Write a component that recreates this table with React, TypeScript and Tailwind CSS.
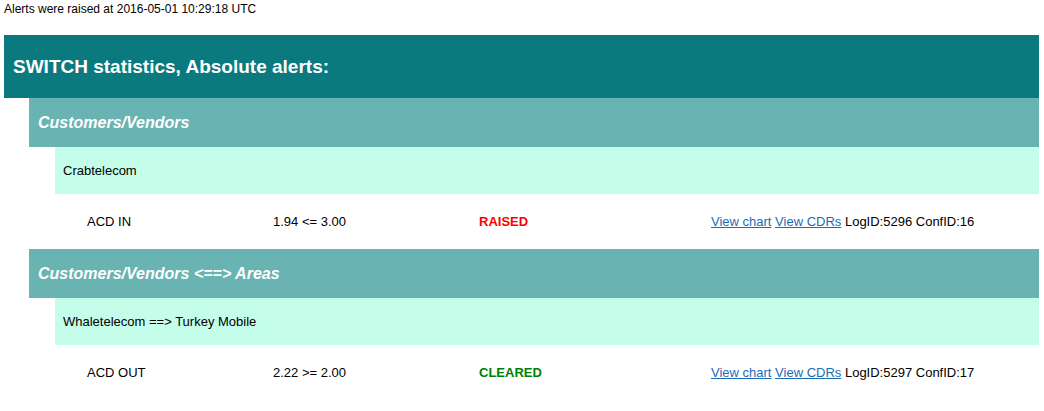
const alerts = [
  {
    group: "Customers/Vendors",
    entity: "Crabtelecom",
    metric: "ACD IN",
    value: "1.94 <= 3.00",
    status: "RAISED",
    logId: 5296,
    confId: 16,
  },
  {
    group: "Customers/Vendors <==> Areas",
    entity: "Whaletelecom ==> Turkey Mobile",
    metric: "ACD OUT",
    value: "2.22 >= 2.00",
    status: "CLEARED",
    logId: 5297,
    confId: 17,
  },
];

export default function App() {
  return (
    <div className="min-h-[411px] bg-white pl-[4px] pr-[5px] font-['Liberation_Sans',Arial,sans-serif] text-[12px] leading-[14px] text-black">
      <div className="h-[35px] pt-[2px]">Alerts were raised at 2016-05-01 10:29:18 UTC</div>

      <div className="flex h-[63px] items-center bg-[#0b7a7f] pl-[9px] text-[19px] font-bold text-white">
        SWITCH statistics, Absolute alerts:
      </div>

      {alerts.map((a) => (
        <div key={a.logId} className="pl-[25px]">
          <div className="flex h-[49px] items-center bg-[#69b3b2] pl-[9px] text-[16px] font-bold italic text-white">
            {a.group}
          </div>
          <div className="pl-[26px]">
            <div className="flex h-[47px] items-center bg-[#c4fde9] pl-[8px] text-[13px]">{a.entity}</div>
          </div>
          <div className="flex h-[55px] items-center pl-[58px] text-[13px]">
            <div className="w-[186px]">{a.metric}</div>
            <div className="w-[206px]">{a.value}</div>
            <div
              className={
                a.status === "RAISED"
                  ? "w-[232px] font-bold text-[#ff0000]"
                  : "w-[232px] font-bold text-[#008000]"
              }
            >
              {a.status}
            </div>
            <div className="whitespace-nowrap">
              <a href="#" className="text-[#1d6db5] underline">View chart</a>{" "}
              <a href="#" className="text-[#1d6db5] underline">View CDRs</a> LogID:{a.logId} ConfID:{a.confId}
            </div>
          </div>
        </div>
      ))}
    </div>
  );
}
